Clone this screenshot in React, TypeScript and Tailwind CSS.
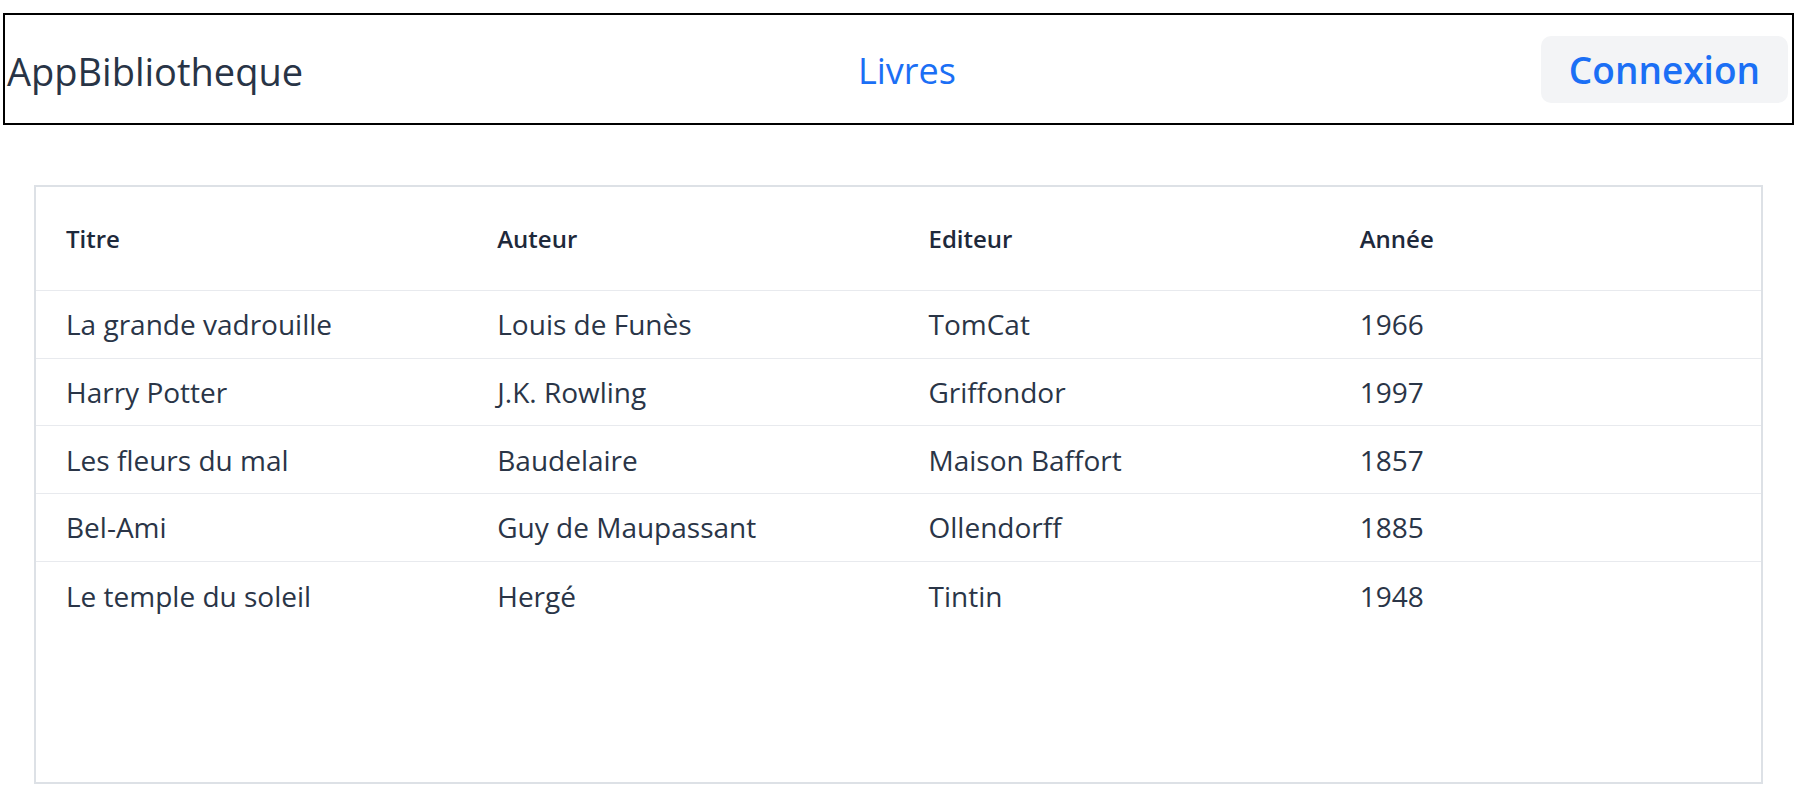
import React from 'react';

const livres = [
  { titre: 'La grande vadrouille', auteur: 'Louis de Funès', editeur: 'TomCat', annee: 1966 },
  { titre: 'Harry Potter', auteur: 'J.K. Rowling', editeur: 'Griffondor', annee: 1997 },
  { titre: 'Les fleurs du mal', auteur: 'Baudelaire', editeur: 'Maison Baffort', annee: 1857 },
  { titre: 'Bel-Ami', auteur: 'Guy de Maupassant', editeur: 'Ollendorff', annee: 1885 },
  { titre: 'Le temple du soleil', auteur: 'Hergé', editeur: 'Tintin', annee: 1948 },
];

function Navbar() {
  return (
    <nav className="mt-[13px] ml-[3px] mr-[4px] h-[112px] border-2 border-black flex items-center justify-between pl-[2px] pr-[4px]">
      <span className="text-[38px] text-[#283446] pt-[4px]">AppBibliotheque</span>
      <a href="#" className="text-[36px] text-[#1b6ff5] pt-[4px] mr-[30px]">Livres</a>
      <button className="h-[67px] px-[28px] rounded-[10px] bg-[#f3f4f6] text-[37px] font-semibold text-[#1b6ff5] leading-none">
        Connexion
      </button>
    </nav>
  );
}

function TableLivres() {
  return (
    <div className="mt-[60px] ml-[34px] mr-[35px] h-[599px] border-2 border-[#dde1e6] bg-white">
      <div className="grid grid-cols-4 items-center h-[104px] border-b border-[#e8eaee] text-[24px] font-semibold text-[#1e293b]">
        <div className="pl-[30px]">Titre</div>
        <div className="pl-[30px]">Auteur</div>
        <div className="pl-[30px]">Editeur</div>
        <div className="pl-[30px]">Année</div>
      </div>
      {livres.map((l, i) => (
        <div
          key={l.titre}
          className={
            'grid grid-cols-4 items-center h-[67.7px] text-[28px] text-[#2a3547] ' +
            (i < livres.length - 1 ? 'border-b border-[#e8eaee]' : '')
          }
        >
          <div className="pl-[30px]">{l.titre}</div>
          <div className="pl-[30px]">{l.auteur}</div>
          <div className="pl-[30px]">{l.editeur}</div>
          <div className="pl-[30px]">{l.annee}</div>
        </div>
      ))}
    </div>
  );
}

export default function App() {
  return (
    <div className="min-h-screen bg-white font-['Open_Sans',sans-serif] pb-[13px]">
      <Navbar />
      <TableLivres />
    </div>
  );
}
